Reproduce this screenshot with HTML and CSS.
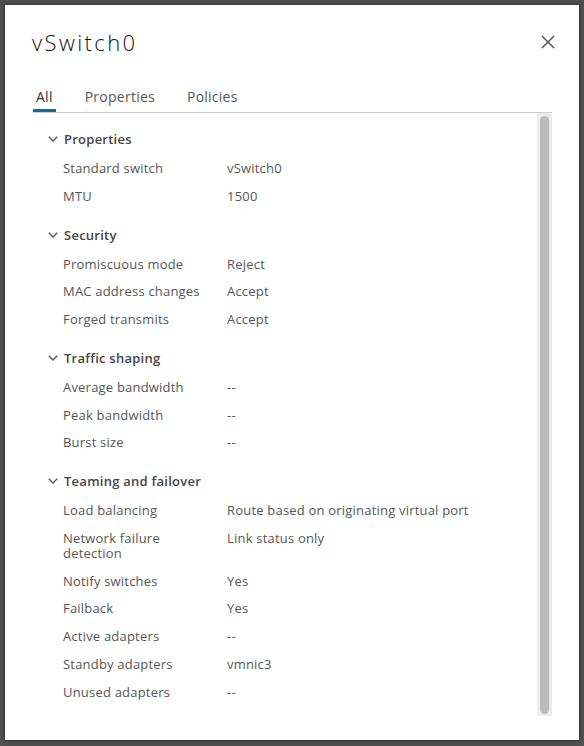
FILE: index.html
```html
<!DOCTYPE html>
<html lang="en">
<head>
<meta charset="utf-8">
<title>vSwitch0</title>
<link rel="stylesheet" href="styles.css">
</head>
<body>
<div class="dialog">
  <div class="header">
    <h1 class="title">vSwitch0</h1>
    <button class="close" aria-label="Close">
      <svg viewBox="0 0 14 14" width="14" height="14"><path d="M1 1 L13 13 M13 1 L1 13" stroke="#555" stroke-width="1.5" fill="none"/></svg>
    </button>
  </div>
  <nav class="tabs">
    <a class="tab active">All</a>
    <a class="tab">Properties</a>
    <a class="tab">Policies</a>
  </nav>
  <div class="body">
    <div class="content">
      <section class="section">
        <div class="section-head"><svg class="chev" viewBox="0 0 10 6"><polyline points="0.8,0.8 5,5 9.2,0.8" fill="none" stroke="#555" stroke-width="1.3"/></svg><span>Properties</span></div>
        <div class="row"><div class="label">Standard switch</div><div class="value">vSwitch0</div></div>
        <div class="row"><div class="label">MTU</div><div class="value">1500</div></div>
      </section>
      <section class="section">
        <div class="section-head"><svg class="chev" viewBox="0 0 10 6"><polyline points="0.8,0.8 5,5 9.2,0.8" fill="none" stroke="#555" stroke-width="1.3"/></svg><span>Security</span></div>
        <div class="row"><div class="label">Promiscuous mode</div><div class="value">Reject</div></div>
        <div class="row"><div class="label">MAC address changes</div><div class="value">Accept</div></div>
        <div class="row"><div class="label">Forged transmits</div><div class="value">Accept</div></div>
      </section>
      <section class="section">
        <div class="section-head"><svg class="chev" viewBox="0 0 10 6"><polyline points="0.8,0.8 5,5 9.2,0.8" fill="none" stroke="#555" stroke-width="1.3"/></svg><span>Traffic shaping</span></div>
        <div class="row"><div class="label">Average bandwidth</div><div class="value">--</div></div>
        <div class="row"><div class="label">Peak bandwidth</div><div class="value">--</div></div>
        <div class="row"><div class="label">Burst size</div><div class="value">--</div></div>
      </section>
      <section class="section">
        <div class="section-head"><svg class="chev" viewBox="0 0 10 6"><polyline points="0.8,0.8 5,5 9.2,0.8" fill="none" stroke="#555" stroke-width="1.3"/></svg><span>Teaming and failover</span></div>
        <div class="row"><div class="label">Load balancing</div><div class="value">Route based on originating virtual port</div></div>
        <div class="row"><div class="label">Network failure detection</div><div class="value">Link status only</div></div>
        <div class="row"><div class="label">Notify switches</div><div class="value">Yes</div></div>
        <div class="row"><div class="label">Failback</div><div class="value">Yes</div></div>
        <div class="row"><div class="label">Active adapters</div><div class="value">--</div></div>
        <div class="row"><div class="label">Standby adapters</div><div class="value">vmnic3</div></div>
        <div class="row"><div class="label">Unused adapters</div><div class="value">--</div></div>
      </section>
    </div>
    <div class="scrollbar"><div class="thumb"></div></div>
  </div>
</div>
</body>
</html>
```
FILE: styles.css
```css
html, body {
  margin: 0;
  height: 100%;
}
body {
  background: #505050;
  font-family: "Open Sans", "Liberation Sans", sans-serif;
  overflow: hidden;
}
.dialog {
  box-sizing: border-box;
  width: 574px;
  height: 735px;
  margin: 5px;
  background: #fff;
  box-shadow: 0 0 4px rgba(0, 0, 0, 0.6);
  padding: 22px 27px 24px 28px;
  display: flex;
  flex-direction: column;
}
.header {
  display: flex;
  justify-content: space-between;
  align-items: center;
  height: 30px;
  margin-bottom: 30px;
}
.title {
  margin: -1px 0 0 -1px;
  font-size: 22px;
  font-weight: 300;
  line-height: 30px;
  color: #111;
  letter-spacing: 2.4px;
}
.close {
  border: 0;
  background: none;
  padding: 0;
  margin-right: -3px;
  width: 14px;
  height: 14px;
  display: flex;
}
.tabs {
  display: flex;
  gap: 26px;
  border-bottom: 1px solid #ccc;
}
.tab {
  padding: 0 3px 2px;
  line-height: 20px;
  font-size: 14px;
  letter-spacing: 0.25px;
  color: #575757;
  border-bottom: 3px solid transparent;
}
.tab.active {
  border-bottom-color: #0072a3;
  color: #333;
}
.body {
  flex: 1;
  display: flex;
  min-height: 0;
}
.content {
  flex: 1;
  padding: 11px 0 0 15px;
  overflow: hidden;
}
.scrollbar {
  width: 15px;
  background: #ececec;
  padding: 3px 3px 2px;
  box-sizing: border-box;
  display: flex;
}
.thumb {
  flex: 1;
  background: #bbb;
  border-radius: 5px;
}
.section {
  margin-bottom: 10px;
}
.section-head {
  display: flex;
  align-items: center;
  height: 30px;
  font-weight: 600;
  color: #454545;
  font-size: 13px;
  letter-spacing: 0.25px;
}
.chev {
  width: 10px;
  height: 6px;
  margin-right: 6px;
}
.row {
  display: flex;
  padding: 7px 0 5.75px 15px;
  line-height: 15px;
  font-size: 13px;
  letter-spacing: 0.2px;
  color: #565656;
}
.label {
  width: 148px;
  flex: none;
  margin-right: 16px;
}
```
